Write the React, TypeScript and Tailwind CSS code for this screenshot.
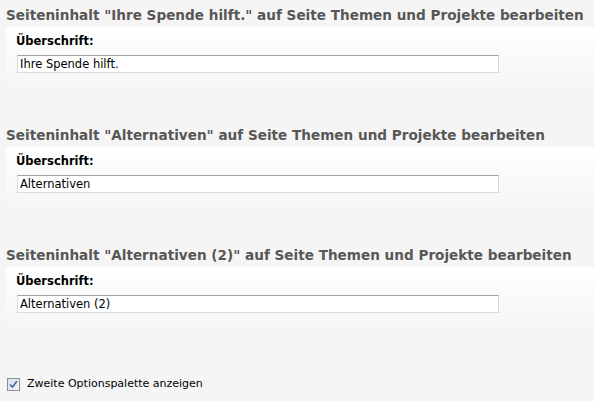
import { useState } from "react";

type Section = {
    title: string;
    value: string;
};

const sections: Section[] = [
    { title: 'Seiteninhalt "Ihre Spende hilft." auf Seite Themen und Projekte bearbeiten', value: "Ihre Spende hilft." },
    { title: 'Seiteninhalt "Alternativen" auf Seite Themen und Projekte bearbeiten', value: "Alternativen" },
    { title: 'Seiteninhalt "Alternativen (2)" auf Seite Themen und Projekte bearbeiten', value: "Alternativen (2)" },
];

const font = "font-['Verdana','DejaVu_Sans',sans-serif]";

const App = () => {
    const [checked, setChecked] = useState(true);

    return (
        <div className={`w-[594px] h-[401px] bg-[#f5f5f5] overflow-hidden ${font}`}>
            {sections.map((s) => (
                <div key={s.value} className="h-[120px] pt-[6px]">
                    <h2 className="pl-[6px] text-[13.6px] leading-[18px] font-bold text-[#585757] whitespace-nowrap">
                        {s.title}
                    </h2>
                    <div className="ml-[6px] mt-[3px] h-[60px] bg-gradient-to-b from-white to-[#f5f5f5] pt-[7px] pl-[10px]">
                        <label className="block text-[11.5px] leading-[14px] font-bold text-black">
                            Überschrift:
                        </label>
                        <input
                            defaultValue={s.value}
                            className="mt-[7px] block w-[482px] h-[18px] ml-px bg-white border border-[#d5dbe3] border-t-[#a3a3a3] px-[2px] text-[11.5px] leading-[14px] text-black outline-none"
                        />
                    </div>
                </div>
            ))}
            <label className="flex items-center gap-[7px] pl-[7px] pt-[16px] text-[11px] text-black cursor-pointer">
                <input
                    type="checkbox"
                    checked={checked}
                    onChange={(e) => setChecked(e.target.checked)}
                    className="sr-only"
                />
                <span className="w-[13px] h-[13px] border border-[#8e8f8f] bg-gradient-to-br from-[#d8dee8] to-[#f4f6f9] flex items-center justify-center">
                    {checked && (
                        <svg width="9" height="9" viewBox="0 0 9 9">
                            <path d="M1 4.5 L3.5 7 L8 1" fill="none" stroke="#4b64a0" strokeWidth="1.6" />
                        </svg>
                    )}
                </span>
                Zweite Optionspalette anzeigen
            </label>
        </div>
    );
};

export default App;
